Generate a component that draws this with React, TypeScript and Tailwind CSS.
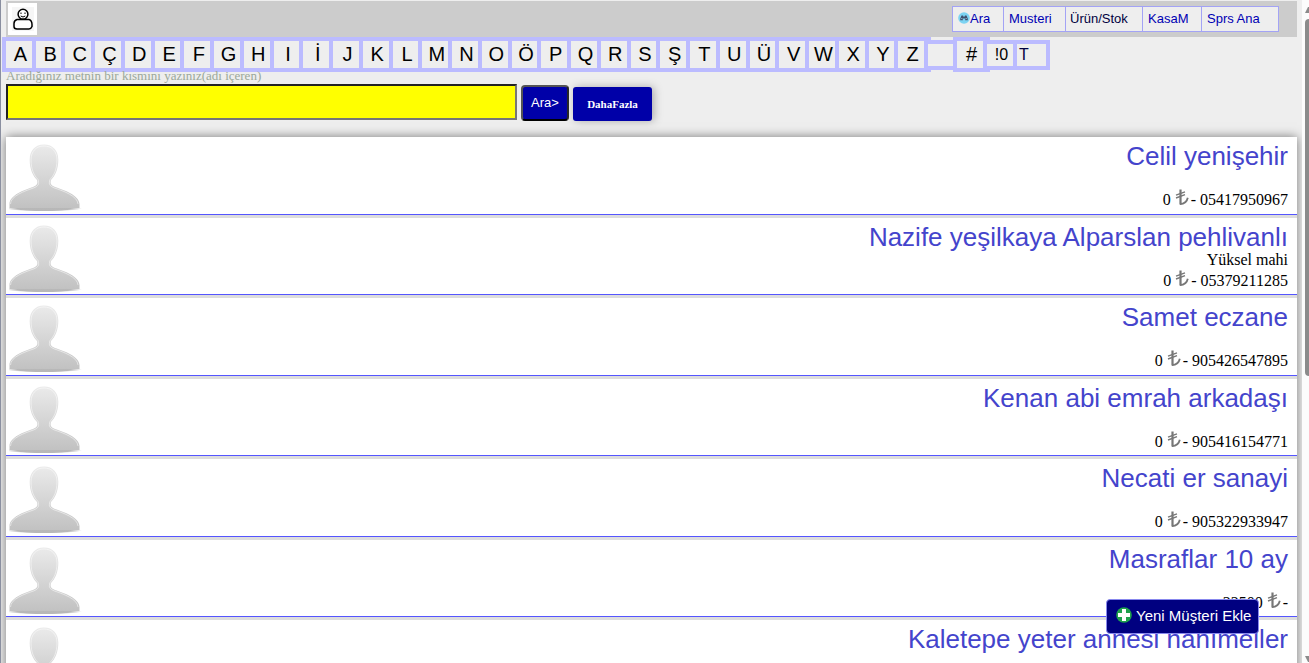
/**
 * App — customer list page: top menu, alphabet filter, search form and customer rows.
 */

import { useState } from 'react'

interface Customer {
  name: string
  note?: string
  balance: string
  phone: string
}

const LETTERS = 'A B C Ç D E F G H I İ J K L M N O Ö P Q R S Ş T U Ü V W X Y Z'.split(' ')

const CUSTOMERS: Customer[] = [
  { name: 'Celil yenişehir', balance: '0', phone: '05417950967' },
  { name: 'Nazife yeşilkaya Alparslan pehlivanlı', note: 'Yüksel mahi', balance: '0', phone: '05379211285' },
  { name: 'Samet eczane', balance: '0', phone: '905426547895' },
  { name: 'Kenan abi emrah arkadaşı', balance: '0', phone: '905416154771' },
  { name: 'Necati er sanayi', balance: '0', phone: '905322933947' },
  { name: 'Masraflar 10 ay', balance: '22500', phone: '' },
  { name: 'Kaletepe yeter annesi hanımeller', balance: '0', phone: '' },
]

// --- Icons ---

function UserIcon() {
  return (
    <svg viewBox="0 0 22 24" className="w-[22px] h-6" fill="#fff" stroke="#000" strokeWidth={1.5} aria-hidden="true">
      <rect width="22" height="24" fill="#f6f6f6" stroke="none" />
      <path d="M5 12.500h12q3 1 3 5v2q-1 2.500-3 2.500H5q-3 0-3-2.500v-3q0-3 3-4z" />
      <circle cx="11" cy="7.2" r="4.9" />
      <path d="M9 5.500v1.500M13 5.500v1.500M8.700 9q2.300 2 4.600 0" fill="none" strokeWidth={1} />
    </svg>
  )
}

function BinocularsIcon() {
  return (
    <svg viewBox="0 0 12 12" className="w-3 h-3 mb-0.5 shrink-0" aria-hidden="true">
      <circle cx="6" cy="6" r="5.8" fill="#7cd3f2" />
      <path d="M3.500 3.500h1.600v1h1.800v-1h1.600l1.300 3.200v1.500H7.200V6.500H4.800v1.700H2.200V6.700z" fill="#40506e" />
      <path d="M3.300 6.500h1M7.700 6.500h1" stroke="#b8e6f6" strokeWidth={0.8} />
    </svg>
  )
}

function LiraIcon() {
  return (
    <svg
      viewBox="0 0 16 16"
      className="inline-block w-4 h-4 align-baseline"
      fill="none"
      stroke="#777"
      aria-label="TL"
    >
      <path d="M5.500 0.500v15" strokeWidth={2.200} />
      <path d="M5 15c4.500 0 7-2.500 7.800-6.200" strokeWidth={1.800} />
      <path d="M1 6.200l9-3.400M1 9l9-3.400" strokeWidth={1.400} />
    </svg>
  )
}

function PlusIcon() {
  return (
    <svg viewBox="0 0 16 16" className="w-4 h-4 mb-1 shrink-0" aria-hidden="true">
      <circle cx="8" cy="8" r="7.8" fill="#1ea04c" />
      <path d="M8 2v12M2 8h12" stroke="#fff" strokeWidth={4} />
    </svg>
  )
}

function Avatar() {
  return (
    <svg viewBox="0 0 74 68" className="w-[74px] h-[68px] shrink-0" aria-hidden="true">
      <defs>
        <linearGradient id="skin" x1="0" y1="0" x2="0" y2="68" gradientUnits="userSpaceOnUse">
          <stop offset="0" stopColor="#ebebeb" />
          <stop offset="1" stopColor="#bfbfbf" />
        </linearGradient>
        <radialGradient id="floor">
          <stop offset="0.7" stopColor="#999" stopOpacity="0.7" />
          <stop offset="1" stopColor="#999" stopOpacity="0" />
        </radialGradient>
      </defs>
      <ellipse cx="35" cy="64.500" rx="38" ry="3" fill="url(#floor)" />
      <path
        d="M35 0.500c9 0 14.300 6 14.300 15.500 0 9-3.300 16-7.300 20-1 4 0 5 4 7 9 3 24 8 24.500 17v4H0.500v-4C1 51 15 46 24 43c4-2 5-3 4-7-4-4-7.300-11-7.300-20C20.700 6.500 26 0.500 35 0.500z"
        fill="url(#skin)"
      />
      <path
        d="M1.500 60c0-8 14-13 23-16 5-2 6-4 4.500-8.500-4-4-7-10.500-7-19.500C22 7.500 27 2 35 2s13 5.500 13 14c0 9-3 15.500-7 19.500-1.500 4.500-0.500 6.500 4.500 8.500 9 3 23 8 23.500 16"
        fill="none"
        stroke="#fff"
        strokeOpacity="0.5"
      />
    </svg>
  )
}

// --- Top menu ---

function TopBar() {
  return (
    <header className="flex justify-between h-9 bg-[#ccc]">
      <a href="#profil" aria-label="Profil" className="flex items-center justify-center w-[29px] h-8 mt-0.5 ml-0.5 bg-white">
        <UserIcon />
      </a>
      <nav className="flex h-[26px] mt-[5px] mr-[18px] border border-[#a3a3f5] bg-[#eee] divide-x divide-[#a3a3f5] text-[13px] text-[#0000b4]">
        <a href="#ara" className="flex items-center w-[51px] pl-[5px]">
          <BinocularsIcon />
          Ara
        </a>
        <a href="#musteri" className="flex items-center w-[62px] pl-[5px]">Musteri</a>
        <a href="#stok" className="flex items-center w-[77px] pl-1 text-[#000040]">Ürün/Stok</a>
        <a href="#kasa" className="flex items-center w-[59px] pl-[5px]">KasaM</a>
        <a href="#siparis" className="flex items-center w-[76px] pl-[5px]">Sprs Ana</a>
      </nav>
    </header>
  )
}

// --- Alphabet filter ---

function AlphabetBar() {
  return (
    <nav className="flex items-center -ml-1 h-[35px] leading-5 text-black">
      <div className="grid grid-cols-31 gap-1 w-[929px] h-full py-1 pl-1 pr-[7px] bg-[#bbf] text-[20px]">
        {LETTERS.map((letter) => (
          <a key={letter} href={`#${letter}`} className="flex items-center justify-center pl-[3px] pb-0.5 bg-[#eee]">
            {letter}
          </a>
        ))}
      </div>
      <a href="#bos" aria-label="Boş" className="w-[33px] h-[30px] -ml-[7px] border-4 border-[#bbf] bg-[#eee]" />
      <div className="-ml-1 w-[37px] h-full py-1 pl-1 pr-[7px] bg-[#bbf] text-[20px]">
        <a href="#sayi" className="flex items-center justify-center h-full pl-[3px] pb-0.5 bg-[#eee]">#</a>
      </div>
      <a href="#sifir" className="flex items-center justify-center w-[34px] h-[30px] -ml-[7px] pl-[3px] border-4 border-[#bbf] bg-[#eee]">
        !0
      </a>
      <a href="#tum" className="flex items-center w-[37px] h-[30px] -ml-1 pl-0.5 border-4 border-[#bbf] bg-[#eee] text-[#000040]">
        T
      </a>
    </nav>
  )
}

// --- Search form ---

function SearchForm() {
  const [query, setQuery] = useState('')

  return (
    <form onSubmit={(e) => e.preventDefault()}>
      <label htmlFor="query" className="block h-3 leading-2 text-[13px] text-[#9aa89a] font-['Liberation_Serif',serif]">
        Aradığınız metnin bir kısmını yazınız(adı içeren)
      </label>
      <div className="flex gap-1">
        <input
          id="query"
          type="text"
          value={query}
          onChange={(e) => setQuery(e.target.value)}
          className="w-[511px] h-9 px-1 bg-[#ff0] border-2 border-t-[#222] border-l-[#222] border-r-[#767676] border-b-[#767676] outline-none"
        />
        <button
          type="submit"
          className="w-12 h-9 mt-px rounded-sm border-2 border-t-[#555] border-l-[#555] border-r-[#222] border-b-black bg-[#0000a8] text-white text-[13px]"
        >
          Ara&gt;
        </button>
        <button
          type="button"
          className="w-[79px] h-[34px] mt-[3px] rounded-[3px] bg-[#0000a8] text-white text-[11px] font-bold font-['Liberation_Serif',serif] shadow-[2px_0_8px_#aaa]"
        >
          DahaFazla
        </button>
      </div>
    </form>
  )
}

// --- Customer row ---

function CustomerRow({ customer }: { customer: Customer }) {
  return (
    <li className="flex justify-between odd:h-[78px] even:h-[77px] pl-[3px] pr-[9px] bg-white border-b border-[#55f]">
      <div className="pt-[7px]">
        <Avatar />
      </div>
      <div className="pt-1.5 text-right text-base leading-5 text-black font-['Liberation_Serif',serif]">
        <a href="#musteri" className="block text-[26px] leading-[26px] text-[#4444cc] font-['Liberation_Sans',sans-serif]">
          {customer.name}
        </a>
        <p className="h-5">{customer.note}</p>
        <p className="h-5">
          {customer.balance} <LiraIcon />- {customer.phone}
        </p>
      </div>
    </li>
  )
}

// --- Page scrollbar ---

function ScrollRail() {
  return (
    <div className="flex flex-col justify-between w-[7px] pl-[3px] bg-[#fcfcfc] overflow-hidden">
      <div>
        <svg viewBox="0 0 4 6" className="w-1 h-1.5 mt-[7px]" aria-hidden="true">
          <path d="M0 6L3 0h1v6z" fill="#8b8b8b" />
        </svg>
        <div className="w-2 h-[357px] mt-1.5 rounded-l bg-[#8b8b8b]" />
      </div>
      <svg viewBox="0 0 4 6" className="w-1 h-1.5 mb-px" aria-hidden="true">
        <path d="M0 0l3 6h1V0z" fill="#8b8b8b" />
      </svg>
    </div>
  )
}

// --- Main component ---

export default function App() {
  return (
    <div className="flex h-screen overflow-hidden border-l border-[#8a8fa0] bg-[#eee] font-['Liberation_Sans',sans-serif]">
      <main className="flex-1 min-w-0 pt-px px-[5px] overflow-hidden">
        <TopBar />
        <AlphabetBar />
        <SearchForm />
        <ul className="flex flex-col gap-[3px] mt-4 bg-[#ddd] shadow-[0_0_10px_#777]">
          {CUSTOMERS.map((customer) => (
            <CustomerRow key={customer.name} customer={customer} />
          ))}
        </ul>
      </main>
      <ScrollRail />
      <button
        type="button"
        className="fixed right-[50px] bottom-[29px] flex items-center gap-1 w-[153px] h-[35px] pl-[9px] rounded border border-[#8888ee] bg-[#000080] text-white text-[15px] whitespace-nowrap"
      >
        <PlusIcon />
        Yeni Müşteri Ekle
      </button>
    </div>
  )
}
